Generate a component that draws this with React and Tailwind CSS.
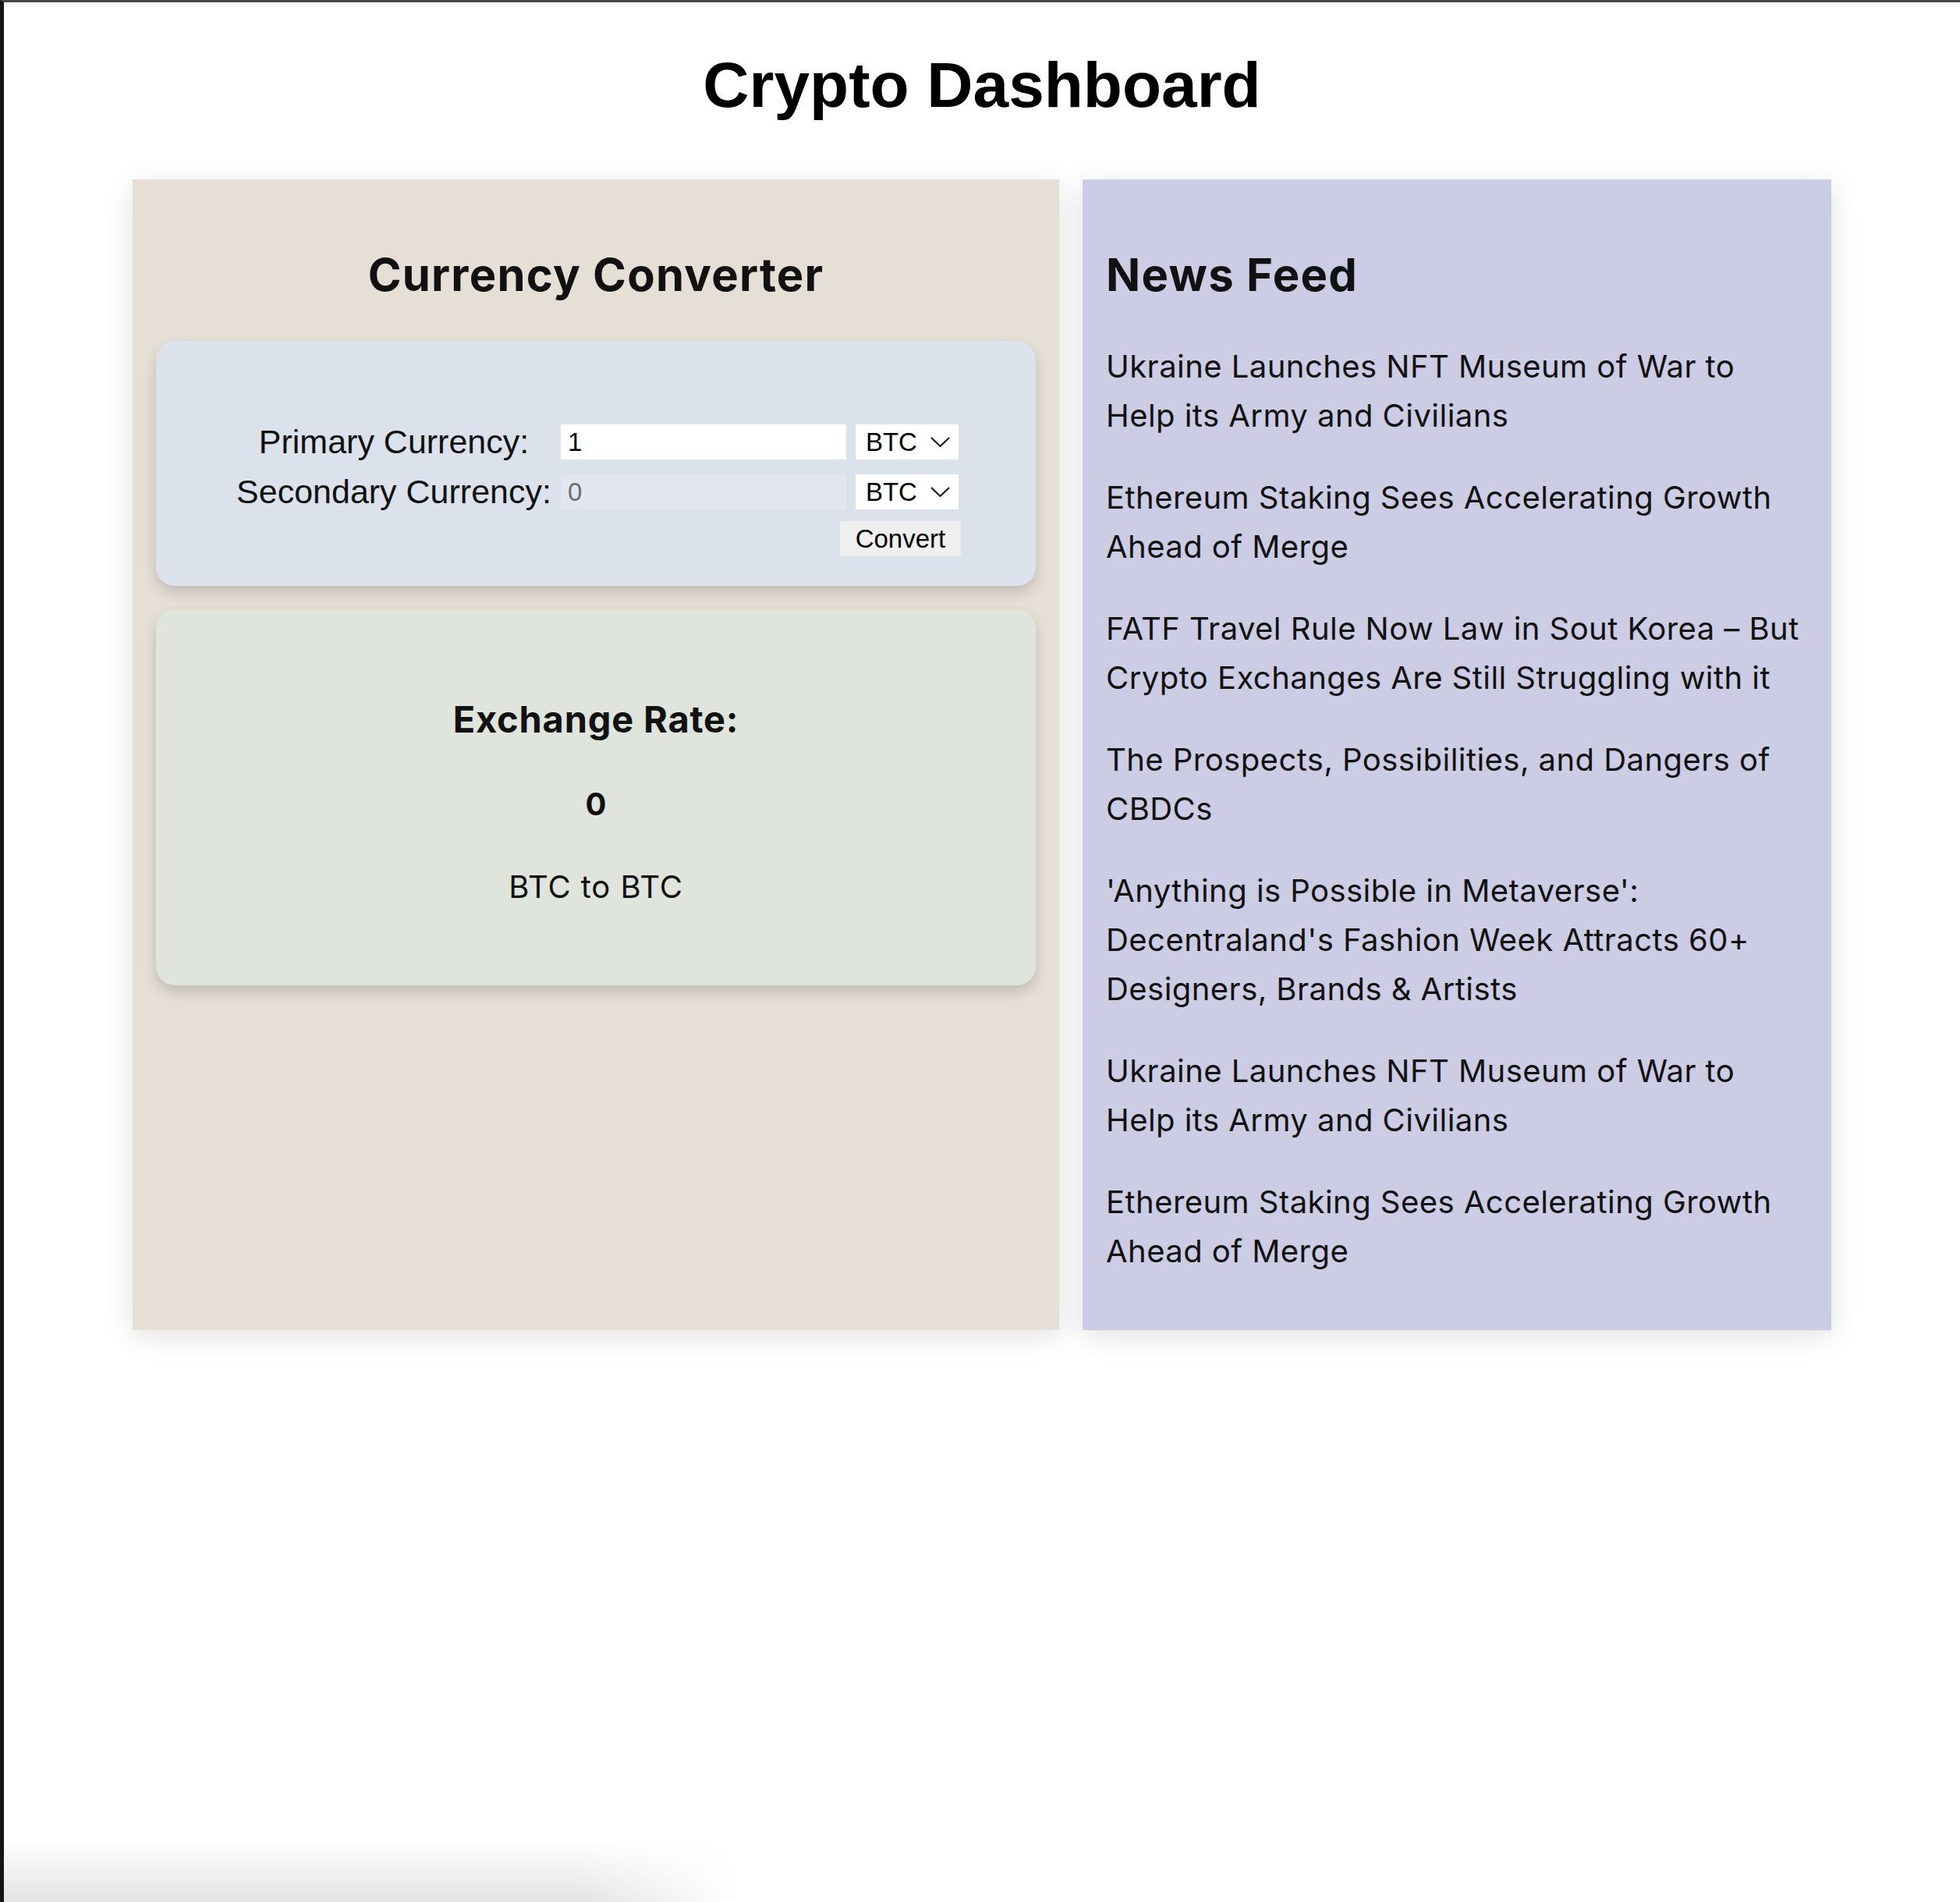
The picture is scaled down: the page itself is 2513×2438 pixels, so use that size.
import { useState } from 'react'

const news = [
  'Ukraine Launches NFT Museum of War to Help its Army and Civilians',
  'Ethereum Staking Sees Accelerating Growth Ahead of Merge',
  'FATF Travel Rule Now Law in Sout Korea – But Crypto Exchanges Are Still Struggling with it',
  'The Prospects, Possibilities, and Dangers of CBDCs',
  "'Anything is Possible in Metaverse': Decentraland's Fashion Week Attracts 60+ Designers, Brands & Artists",
  'Ukraine Launches NFT Museum of War to Help its Army and Civilians',
  'Ethereum Staking Sees Accelerating Growth Ahead of Merge'
]

function CurrencySelect({ value, onChange }) {
  return (
    <div className="relative h-[45px] w-[132px] bg-white">
      <select
        value={value}
        onChange={(e) => onChange(e.target.value)}
        className="h-full w-full appearance-none bg-transparent pl-[13px] font-['Liberation_Sans',Arial,sans-serif] text-[33px] leading-none text-black outline-none"
      >
        <option>BTC</option>
        <option>ETH</option>
        <option>USD</option>
      </select>
      <svg
        className="pointer-events-none absolute right-[11px] top-[16px] h-[13px] w-[25px]"
        viewBox="0 0 25 13"
        fill="none"
        stroke="#111"
        strokeWidth="2"
      >
        <path d="M1 1 L12.5 12 L24 1" />
      </svg>
    </div>
  )
}

export default function App() {
  const [primary, setPrimary] = useState('BTC')
  const [secondary, setSecondary] = useState('BTC')
  const [amount, setAmount] = useState('1')

  return (
    <div className="relative min-h-[2438px] overflow-hidden border-l-[5px] border-t-[3px] border-l-[#151515] border-t-[#474747] bg-white text-[#111]">
      <h1 className="mt-[59px] text-center font-['Liberation_Sans',Arial,sans-serif] text-[82px] font-bold leading-[94px] text-black">
        Crypto Dashboard
      </h1>

      <div className="mt-[74px] flex items-stretch justify-center gap-[30px]">
        {/* converter */}
        <section className="w-[1188px] bg-[#e5dfd5] px-[30px] pt-[87px] shadow-[0_8px_36px_rgba(0,0,0,0.12)]">
          <h2 className="text-center font-['Inter',sans-serif] text-[58px] font-bold leading-[70px] tracking-[1.2px]">
            Currency Converter
          </h2>

          <div className="mt-[50px] rounded-[24px] bg-[#dce2ec] pb-[38px] pt-[107px] shadow-[0_8px_18px_rgba(0,0,0,0.16)]">
            <div className="mx-auto grid w-fit translate-x-[2px] grid-cols-[auto_366px_132px] items-center gap-x-[12px] gap-y-[19px]">
              <label className="text-center font-['Liberation_Sans',Arial,sans-serif] text-[43px] leading-none">
                Primary Currency:
              </label>
              <input
                value={amount}
                onChange={(e) => setAmount(e.target.value)}
                className="h-[45px] w-[366px] bg-white px-[9px] font-['Liberation_Sans',Arial,sans-serif] text-[33px] text-black outline-none"
              />
              <CurrencySelect value={primary} onChange={setPrimary} />

              <label className="text-center font-['Liberation_Sans',Arial,sans-serif] text-[43px] leading-none">
                Secondary Currency:
              </label>
              <input
                value="0"
                disabled
                className="h-[45px] w-[366px] bg-[#e2e6ee] px-[9px] font-['Liberation_Sans',Arial,sans-serif] text-[33px] text-[#6d6d6d] outline-none"
              />
              <CurrencySelect value={secondary} onChange={setSecondary} />

              <button className="col-span-3 -mr-[3px] -mt-[4px] h-[45px] w-[155px] justify-self-end bg-[#efefef] font-['Liberation_Sans',Arial,sans-serif] text-[33px] leading-none text-black">
                Convert
              </button>
            </div>
          </div>

          <div className="mt-[31px] rounded-[24px] bg-[#dfe5dd] pb-[102px] pt-[112px] text-center font-['Inter',sans-serif] shadow-[0_8px_18px_rgba(0,0,0,0.16)]">
            <h3 className="text-[47px] font-bold leading-[56px] tracking-[0.8px]">Exchange Rate:</h3>
            <div className="mt-[57px] text-[40px] font-bold leading-[48px]">0</div>
            <div className="mt-[58px] text-[40px] leading-[48px] tracking-[0.9px]">
              {primary} to {secondary}
            </div>
          </div>
        </section>

        {/* news */}
        <section className="w-[960px] bg-[#cccce4] px-[30px] pb-[70px] pt-[87px] font-['Inter',sans-serif] shadow-[0_8px_36px_rgba(0,0,0,0.12)]">
          <h2 className="text-[58px] font-bold leading-[70px] tracking-[1.3px]">News Feed</h2>
          <div className="mt-[51px] flex flex-col gap-[42px]">
            {news.map((title, i) => (
              <p key={i} className="text-[40px] leading-[63px] tracking-[0.45px]">
                {title}
              </p>
            ))}
          </div>
        </section>
      </div>

      <div className="pointer-events-none absolute bottom-0 left-0 h-[80px] w-[940px] bg-[linear-gradient(to_bottom,rgba(0,0,0,0),rgba(0,0,0,0.11))] [mask-image:linear-gradient(to_right,black_78%,transparent)]" />
    </div>
  )
}
